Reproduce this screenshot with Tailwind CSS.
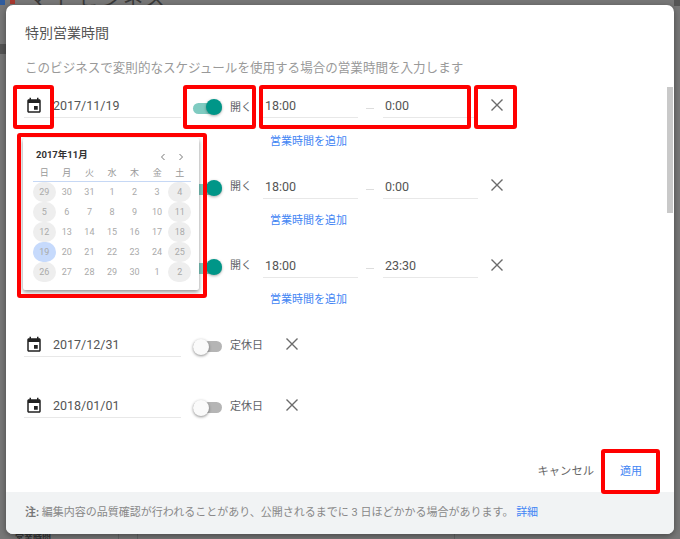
<!doctype html>
<html><head><meta charset="utf-8">
<script src="https://cdn.jsdelivr.net/npm/@tailwindcss/browser@4"></script>
</head>
<body class="m-0">
<div class="relative w-[680px] h-[539px] overflow-hidden bg-[#777777] text-[#5f6368] font-['Roboto','Noto_Sans_CJK_JP',sans-serif]">
  <!-- dimmed page behind the dialog -->
  <span class="absolute left-[0px] top-[-3px] w-[5px] h-[8px] bg-[#2f5c9e]"></span>
  <span class="absolute left-[10px] top-[0px] w-[5px] h-[4px] bg-[#a8382f]"></span>
  <span class="absolute left-[28px] top-[-13px] text-[20px] leading-[24px] tracking-[2px] text-[#3a3a3a] whitespace-nowrap">マイ ビジネス</span>
  <span class="absolute left-[15px] top-[532px] text-[9px] leading-[12px] font-bold text-[#333] whitespace-nowrap">営業時間</span>
  <span class="absolute left-[0px] top-[44px] w-[6px] h-[10px] bg-[#555]"></span>
  <span class="absolute left-[118px] top-[534px] w-[1px] h-[5px] bg-[#666]"></span>
  <span class="absolute left-[137px] top-[534px] w-[1px] h-[5px] bg-[#666]"></span>
  <span class="absolute left-[454px] top-[534px] w-[1px] h-[5px] bg-[#666]"></span>
  <span class="absolute left-[674px] top-[0px] w-[6px] h-[6px] bg-[#555]"></span>

  <!-- dialog -->
  <div class="absolute left-[6px] top-[5px] w-[668px] h-[529px] rounded-[7px] bg-white shadow-[0_2px_6px_rgba(0,0,0,0.4)] overflow-hidden flex flex-col">
    <div class="flex-1 relative pl-[19px]">
      <h1 class="mt-[18px] text-[14px] leading-[20px] font-normal text-[#555]">特別営業時間</h1>
      <p class="mt-[15px] text-[12.55px] leading-[20px] text-[#999]">このビジネスで変則的なスケジュールを使用する場合の営業時間を入力します</p>
      <div class="absolute right-[1px] top-[82px] w-[6px] h-[126px] bg-[#c9c9c9]"></div>

      <!-- row 1 -->
      <div class="mt-[7px] flex h-[81px] items-start">
        <div class="-ml-[1px] pl-[1px] pt-[10px] w-[157px] h-[33px] border-b border-[#e8e8e8] flex items-center shrink-0">
          <svg class="w-[18px] h-[18px] mr-[10px] shrink-0" viewBox="0 0 24 24" fill="#222"><path d="M17 12h-5v5h5v-5zM16 1v2H8V1H6v2H5c-1.11 0-1.99.9-1.99 2L3 19c0 1.1.89 2 2 2h14c1.1 0 2-.9 2-2V5c0-1.1-.9-2-2-2h-1V1h-2zm3 18H5V8h14v11z"/></svg>
          <span class="text-[12.5px] text-[#555]">2017/11/19</span>
        </div>
        <div class="ml-[12px] w-[29px] h-[11px] mt-[18px] relative shrink-0 bg-[#7fcbc1] rounded-full"><span class="absolute right-0 top-[-4px] w-[16px] h-[16px] rounded-full bg-[#009688] shadow-[0_1px_3px_rgba(0,0,0,0.35)]"></span></div>
        <span class="ml-[8px] w-[22px] mt-[14px] text-[11px] leading-[18px] shrink-0">開く</span>
        <div class="ml-[11px] w-[95px] h-[33px] border-b border-[#e8e8e8] shrink-0 text-[12.5px] leading-[20px] text-[#555] pl-[2px] pt-[11px]">18:00</div>
        <span class="w-[8px] h-[1px] mt-[23px] ml-[8px] bg-[#ddd] shrink-0"></span>
        <div class="ml-[9px] w-[95px] h-[33px] border-b border-[#e8e8e8] shrink-0 text-[12.5px] leading-[20px] text-[#555] pl-[2px] pt-[11px]">0:00</div>
        <svg class="ml-[10px] mt-[11px] w-[18px] h-[18px] shrink-0" viewBox="0 0 18 18" fill="none" stroke="#6b6b6b" stroke-width="1.4"><path d="M3.5 3.5l11 11M14.5 3.5l-11 11"/></svg>
      </div>

      <!-- row 2 -->
      <div class="flex h-[79px] items-start">
        <div class="-ml-[1px] w-[157px] shrink-0"></div>
        <div class="ml-[12px] w-[29px] h-[11px] mt-[18px] relative shrink-0 bg-[#7fcbc1] rounded-full"><span class="absolute right-0 top-[-4px] w-[16px] h-[16px] rounded-full bg-[#009688] shadow-[0_1px_3px_rgba(0,0,0,0.35)]"></span></div>
        <span class="ml-[8px] w-[22px] mt-[12px] text-[11px] leading-[18px] shrink-0">開く</span>
        <div class="ml-[11px] w-[95px] h-[33px] border-b border-[#e8e8e8] shrink-0 text-[12.5px] leading-[20px] text-[#555] pl-[2px] pt-[11px]">18:00</div>
        <span class="w-[8px] h-[1px] mt-[23px] ml-[8px] bg-[#ddd] shrink-0"></span>
        <div class="ml-[9px] w-[95px] h-[33px] border-b border-[#e8e8e8] shrink-0 text-[12.5px] leading-[20px] text-[#555] pl-[2px] pt-[11px]">0:00</div>
        <svg class="ml-[10px] mt-[10px] w-[18px] h-[18px] shrink-0" viewBox="0 0 18 18" fill="none" stroke="#6b6b6b" stroke-width="1.4"><path d="M3.5 3.5l11 11M14.5 3.5l-11 11"/></svg>
      </div>

      <!-- row 3 -->
      <div class="flex h-[79px] items-start">
        <div class="-ml-[1px] w-[157px] shrink-0"></div>
        <div class="ml-[12px] w-[29px] h-[11px] mt-[18px] relative shrink-0 bg-[#7fcbc1] rounded-full"><span class="absolute right-0 top-[-4px] w-[16px] h-[16px] rounded-full bg-[#009688] shadow-[0_1px_3px_rgba(0,0,0,0.35)]"></span></div>
        <span class="ml-[8px] w-[22px] mt-[12px] text-[11px] leading-[18px] shrink-0">開く</span>
        <div class="ml-[11px] w-[95px] h-[33px] border-b border-[#e8e8e8] shrink-0 text-[12.5px] leading-[20px] text-[#555] pl-[2px] pt-[11px]">18:00</div>
        <span class="w-[8px] h-[1px] mt-[23px] ml-[8px] bg-[#ddd] shrink-0"></span>
        <div class="ml-[9px] w-[95px] h-[33px] border-b border-[#e8e8e8] shrink-0 text-[12.5px] leading-[20px] text-[#555] pl-[2px] pt-[11px]">23:30</div>
        <svg class="ml-[10px] mt-[11px] w-[18px] h-[18px] shrink-0" viewBox="0 0 18 18" fill="none" stroke="#6b6b6b" stroke-width="1.4"><path d="M3.5 3.5l11 11M14.5 3.5l-11 11"/></svg>
      </div>

      <!-- row 4 -->
      <div class="flex h-[61px] items-start">
        <div class="-ml-[1px] pl-[1px] pt-[10px] w-[157px] h-[33px] border-b border-[#e8e8e8] flex items-center shrink-0">
          <svg class="w-[18px] h-[18px] mr-[10px] shrink-0" viewBox="0 0 24 24" fill="#222"><path d="M17 12h-5v5h5v-5zM16 1v2H8V1H6v2H5c-1.11 0-1.99.9-1.99 2L3 19c0 1.1.89 2 2 2h14c1.1 0 2-.9 2-2V5c0-1.1-.9-2-2-2h-1V1h-2zm3 18H5V8h14v11z"/></svg>
          <span class="text-[12.5px] text-[#555]">2017/12/31</span>
        </div>
        <div class="ml-[12px] w-[29px] h-[11px] mt-[17px] relative shrink-0 bg-[#b5b5b5] rounded-full"><span class="absolute left-0 top-[-2px] w-[16px] h-[16px] rounded-full bg-[#fafafa] shadow-[0_1px_3px_rgba(0,0,0,0.45)]"></span></div>
        <span class="ml-[8px] mt-[13px] w-[33px] text-[11px] leading-[18px] shrink-0">定休日</span>
        <svg class="ml-[20px] mt-[11px] w-[18px] h-[18px] shrink-0" viewBox="0 0 18 18" fill="none" stroke="#6b6b6b" stroke-width="1.4"><path d="M3.5 3.5l11 11M14.5 3.5l-11 11"/></svg>
      </div>

      <!-- row 5 -->
      <div class="flex h-[40px] items-start">
        <div class="-ml-[1px] pl-[1px] pt-[10px] w-[157px] h-[33px] border-b border-[#e8e8e8] flex items-center shrink-0">
          <svg class="w-[18px] h-[18px] mr-[10px] shrink-0" viewBox="0 0 24 24" fill="#222"><path d="M17 12h-5v5h5v-5zM16 1v2H8V1H6v2H5c-1.11 0-1.99.9-1.99 2L3 19c0 1.1.89 2 2 2h14c1.1 0 2-.9 2-2V5c0-1.1-.9-2-2-2h-1V1h-2zm3 18H5V8h14v11z"/></svg>
          <span class="text-[12.5px] text-[#555]">2018/01/01</span>
        </div>
        <div class="ml-[12px] w-[29px] h-[11px] mt-[17px] relative shrink-0 bg-[#b5b5b5] rounded-full"><span class="absolute left-0 top-[-2px] w-[16px] h-[16px] rounded-full bg-[#fafafa] shadow-[0_1px_3px_rgba(0,0,0,0.45)]"></span></div>
        <span class="ml-[8px] mt-[13px] w-[33px] text-[11px] leading-[18px] shrink-0">定休日</span>
        <svg class="ml-[20px] mt-[11px] w-[18px] h-[18px] shrink-0" viewBox="0 0 18 18" fill="none" stroke="#6b6b6b" stroke-width="1.4"><path d="M3.5 3.5l11 11M14.5 3.5l-11 11"/></svg>
      </div>

      <div class="absolute right-[32px] bottom-[11px] flex items-center gap-[26px] text-[11px] leading-[18px]">
        <span class="text-[#666] text-[11.3px]">キャンセル</span>
        <span class="text-[#4285f4]">適用</span>
      </div>
    </div>
    <!-- footer -->
    <div class="h-[42px] shrink-0 bg-[#f1f3f4] pl-[19px] pt-[1px] flex items-center text-[11px] text-[#888]">
      <span><b class="font-bold text-[#777]">注:</b> 編集内容の品質確認が行われることがあり、公開されるまでに 3 日ほどかかる場合があります。 <span class="text-[#4285f4]">詳細</span></span>
    </div>
  </div>

  <!-- calendar popup -->
  <div class="absolute left-[23px] top-[138px] w-[176px] h-[152px] bg-white rounded-[2px] shadow-[0_2px_4px_rgba(0,0,0,0.45)] pl-[10px] pt-[7px]">
    <div class="flex items-center justify-between h-[20px] w-[158px]">
      <span class="ml-[3px] text-[9.5px] font-bold text-[#333]">2017年11月</span>
      <span class="flex gap-[10px] mr-[6px] mt-[3px]">
        <svg class="w-[8px] h-[8px]" viewBox="0 0 8 8" fill="none" stroke="#777" stroke-width="1"><path d="M5.5 1L2.5 4l3 3"/></svg>
        <svg class="w-[8px] h-[8px]" viewBox="0 0 8 8" fill="none" stroke="#777" stroke-width="1"><path d="M2.5 1l3 3-3 3"/></svg>
      </span>
    </div>
    <div class="grid grid-cols-7 text-[9px] text-[#999] text-center h-[17px] leading-[17px] border-b border-[#c6d8f5] w-[158px]">
      <span>日</span><span>月</span><span>火</span><span>水</span><span>木</span><span>金</span><span>土</span>
    </div>
    <div class="grid grid-cols-7 w-[158px] text-[9px] text-[#aaa] text-center auto-rows-[20px] leading-[20px]">
      <span class="bg-[#eeeeee] rounded-full">29</span><span>30</span><span>31</span><span>1</span><span>2</span><span>3</span><span class="bg-[#eeeeee] rounded-full">4</span>
      <span class="bg-[#eeeeee] rounded-full">5</span><span>6</span><span>7</span><span>8</span><span>9</span><span>10</span><span class="bg-[#eeeeee] rounded-full">11</span>
      <span class="bg-[#eeeeee] rounded-full">12</span><span>13</span><span>14</span><span>15</span><span>16</span><span>17</span><span class="bg-[#eeeeee] rounded-full">18</span>
      <span class="bg-[#c6dafc] rounded-full">19</span><span>20</span><span>21</span><span>22</span><span>23</span><span>24</span><span class="bg-[#eeeeee] rounded-full">25</span>
      <span class="bg-[#eeeeee] rounded-full">26</span><span>27</span><span>28</span><span>29</span><span>30</span><span>1</span><span class="bg-[#eeeeee] rounded-full">2</span>
    </div>
  </div>

  <!-- add-hours links -->
  <span class="absolute left-[270px] top-[134px] text-[11px] leading-[16px] text-[#4285f4]">営業時間を追加</span>
  <span class="absolute left-[270px] top-[213px] text-[11px] leading-[16px] text-[#4285f4]">営業時間を追加</span>
  <span class="absolute left-[270px] top-[292px] text-[11px] leading-[16px] text-[#4285f4]">営業時間を追加</span>

  <!-- red annotation boxes -->
  <div class="absolute left-[13px] top-[85px] w-[41px] h-[44px] border-[4px] border-[#ff0000] rounded-[3px]"></div>
  <div class="absolute left-[183px] top-[85px] w-[73px] h-[44px] border-[4px] border-[#ff0000] rounded-[3px]"></div>
  <div class="absolute left-[259px] top-[85px] w-[212px] h-[44px] border-[4px] border-[#ff0000] rounded-[3px]"></div>
  <div class="absolute left-[474px] top-[85px] w-[43px] h-[44px] border-[4px] border-[#ff0000] rounded-[3px]"></div>
  <div class="absolute left-[17px] top-[133px] w-[190px] h-[165px] border-[4px] border-[#ff0000] rounded-[3px]"></div>
  <div class="absolute left-[601px] top-[449px] w-[59px] h-[45px] border-[4px] border-[#ff0000] rounded-[3px]"></div>
</div>
</body></html>
